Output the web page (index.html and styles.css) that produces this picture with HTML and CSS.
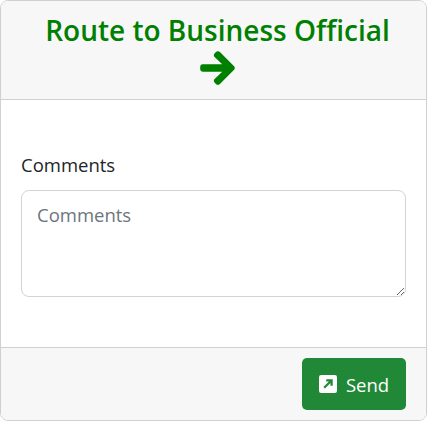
FILE: index.html
```html
<!DOCTYPE html>
<html lang="en">
<head>
<meta charset="utf-8">
<title>Route to Business Official</title>
<link rel="stylesheet" href="styles.css">
</head>
<body>
<div class="card">
  <div class="card-header">
    <h4 class="title">Route to Business Official
      <svg class="title-arrow" viewBox="0 0 448 512" aria-hidden="true"><path d="M190.5 66.9l22.2-22.2c9.4-9.4 24.6-9.4 33.9 0L441 239c9.4 9.4 9.4 24.6 0 33.9L246.6 467.3c-9.4 9.4-24.6 9.4-33.9 0l-22.2-22.2c-9.5-9.5-9.3-25 .4-34.3L311.4 296H24c-13.3 0-24-10.7-24-24v-32c0-13.3 10.7-24 24-24h287.4L190.9 101.2c-9.8-9.3-10-24.8-.4-34.3z"/></svg>
    </h4>
  </div>
  <div class="card-body">
    <label class="field-label" for="comments">Comments</label>
    <textarea class="field" id="comments" placeholder="Comments"></textarea>
  </div>
  <div class="card-footer">
    <button class="send" type="button">
      <svg class="send-icon" viewBox="0 0 16 16" aria-hidden="true"><rect class="send-box" width="16" height="16" rx="2"/><path class="send-arrow" d="M4.6 11.4 10.6 5.4M6.4 4.8H11.2V9.6"/></svg>
      <span>Send</span>
    </button>
  </div>
</div>
</body>
</html>
```
FILE: styles.css
```css
* { box-sizing: border-box; }
html, body { margin: 0; padding: 0; background: #fff; }
body {
  font-family: "Open Sans", "Noto Sans", "Liberation Sans", sans-serif;
  font-size: 18.5px;
  color: #212529;
}
.card {
  width: 427px;
  height: 421px;
  display: flex;
  flex-direction: column;
  border: 1px solid #d0d0d0;
  border-radius: 8px;
  overflow: hidden;
}
.card-header {
  height: 99px;
  flex: none;
  background: #f7f7f7;
  border-bottom: 1px solid #d0d0d0;
  padding: 8px 20px 0 28px;
}
.title {
  margin: 0;
  text-align: center;
  font-size: 28px;
  line-height: 43px;
  font-weight: 600;
  color: #008000;
}
.title-arrow {
  display: block;
  width: 37px;
  height: 38px;
  margin: -3px auto 0;
  fill: #008000;
  stroke: #008000;
  stroke-width: 18;
  stroke-linejoin: round;
  overflow: visible;
}
.card-body {
  flex: 1;
  padding: 52px 20px 0;
}
.field-label {
  display: block;
  line-height: 26px;
  margin-bottom: 12px;
}
.field {
  display: block;
  width: 100%;
  height: 107px;
  padding: 11px 15px;
  border: 1px solid #ced4da;
  border-radius: 8px;
  font: inherit;
  line-height: 26px;
  color: #212529;
  background: #fff;
  outline: none;
}
.field::placeholder { color: #6c757d; opacity: 1; }
.card-footer {
  flex: none;
  height: 73px;
  display: flex;
  justify-content: flex-end;
  align-items: flex-start;
  padding: 10px 20px 0;
  background: #f7f7f7;
  border-top: 1px solid #d0d0d0;
}
.send {
  width: 104px;
  height: 52px;
  display: flex;
  align-items: center;
  justify-content: center;
  gap: 9px;
  border: 0;
  border-radius: 5px;
  background: #218838;
  color: #fff;
  font: inherit;
  padding: 0;
}
.send-icon { width: 18px; height: 18px; flex: none; }
.send-box { fill: #fff; }
.send-arrow { fill: none; stroke: #218838; stroke-width: 2; }
```
